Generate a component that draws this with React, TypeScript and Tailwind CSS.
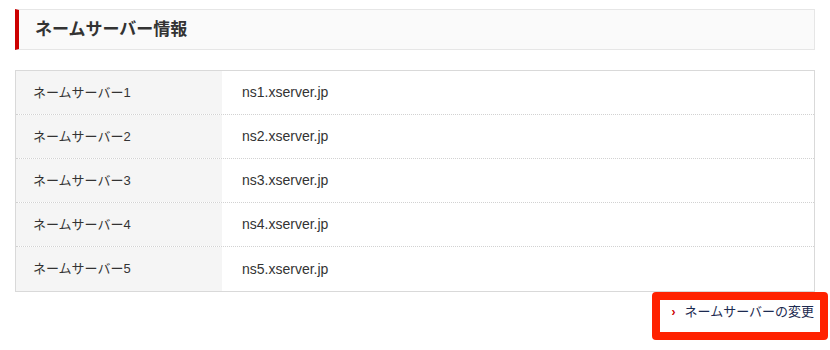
import React from "react";

const rows = [
  ["ネームサーバー1", "ns1.xserver.jp"],
  ["ネームサーバー2", "ns2.xserver.jp"],
  ["ネームサーバー3", "ns3.xserver.jp"],
  ["ネームサーバー4", "ns4.xserver.jp"],
  ["ネームサーバー5", "ns5.xserver.jp"],
];

export default function App() {
  return (
    <div
      className="relative w-[830px] h-[350px] bg-white text-[#333]"
      style={{ fontFamily: '"Liberation Sans", "Noto Sans CJK JP", sans-serif' }}
    >
      <div className="pt-[9px] pl-[15px] w-[815px]">
        <div className="h-[41px] flex items-center border border-[#e6e6e6] border-l-4 border-l-[#cc0000] bg-[#fafafa] pl-[16px]">
          <h2 className="text-[17px] font-bold text-[#333] leading-none">ネームサーバー情報</h2>
        </div>
        <div className="mt-[20px] border border-[#d9d9d9]">
          {rows.map(([k, v], i) => (
            <div
              key={k}
              className={
                "flex h-[44px] " +
                (i < rows.length - 1 ? "border-b border-dotted border-[#d2d2d2]" : "")
              }
            >
              <div className="w-[206px] bg-[#f5f5f5] flex items-center pl-[17px] text-[13px]">{k}</div>
              <div className="flex-1 flex items-center pl-[20px] text-[14px]">{v}</div>
            </div>
          ))}
        </div>
        <div className="flex justify-end mt-[13px] pr-[1px]">
          <a className="flex items-center gap-[9px] text-[13px] text-[#1c2a50] leading-none">
            <span className="text-[#cc0000] text-[12px] font-bold">›</span>
            <span>ネームサーバーの変更</span>
          </a>
        </div>
      </div>
      <div className="absolute left-[652px] top-[292px] w-[176px] h-[48px] border-[8px] border-[#ff2200] rounded-[4px] pointer-events-none" />
    </div>
  );
}
